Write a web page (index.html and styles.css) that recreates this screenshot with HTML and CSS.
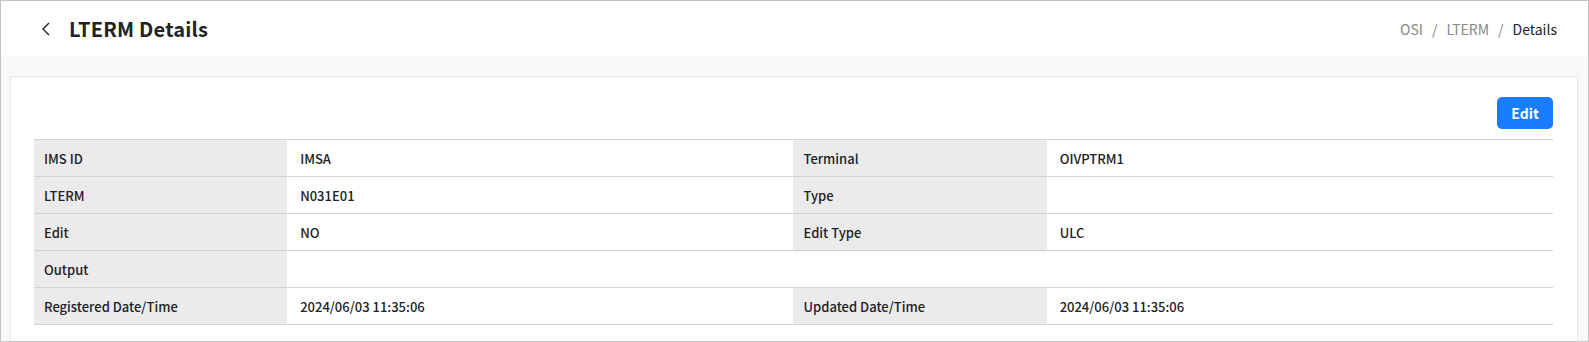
FILE: index.html
```html
<!DOCTYPE html>
<html lang="en">
<head>
    <meta charset="UTF-8">
    <meta name="viewport" content="width=device-width, initial-scale=1.0">
    <title>LTERM Details</title>
    <link rel="stylesheet" href="styles.css">
</head>
<body>
    <div class="page">
        <header class="page-header">
            <div class="title-wrap">
                <button class="back-btn" type="button" aria-label="Back">
                    <svg width="10" height="14" viewBox="0 0 10 14"><path d="M8 1 L2 7 L8 13" fill="none" stroke="#222" stroke-width="1.4"/></svg>
                </button>
                <h1>LTERM Details</h1>
            </div>
            <nav class="breadcrumb">
                <span class="crumb">OSI</span>
                <span class="sep">/</span>
                <span class="crumb">LTERM</span>
                <span class="sep">/</span>
                <span class="crumb current">Details</span>
            </nav>
        </header>

        <main class="content">
            <div class="card">
                <div class="toolbar">
                    <button class="edit-btn" type="button">Edit</button>
                </div>
                <table class="detail-table">
                    <colgroup>
                        <col class="col-label">
                        <col class="col-value">
                        <col class="col-label">
                        <col class="col-value">
                    </colgroup>
                    <tr>
                        <th>IMS ID</th>
                        <td>IMSA</td>
                        <th>Terminal</th>
                        <td>OIVPTRM1</td>
                    </tr>
                    <tr>
                        <th>LTERM</th>
                        <td>N031E01</td>
                        <th>Type</th>
                        <td></td>
                    </tr>
                    <tr>
                        <th>Edit</th>
                        <td>NO</td>
                        <th>Edit Type</th>
                        <td>ULC</td>
                    </tr>
                    <tr>
                        <th>Output</th>
                        <td colspan="3"></td>
                    </tr>
                    <tr>
                        <th>Registered Date/Time</th>
                        <td>2024/06/03 11:35:06</td>
                        <th>Updated Date/Time</th>
                        <td>2024/06/03 11:35:06</td>
                    </tr>
                </table>
            </div>
        </main>
    </div>
</body>
</html>
```

FILE: styles.css
```css
* {
    box-sizing: border-box;
}

html, body {
    margin: 0;
    padding: 0;
}

body {
    font-family: "Noto Sans CJK KR", "Noto Sans", sans-serif;
    color: #222;
    background-color: #fff;
}

.page {
    height: 342px;
    border: 1px solid #c4c4c4;
    overflow: hidden;
    background-color: #f7f8fa;
}

.page-header {
    height: 55px;
    background-color: #fff;
    display: flex;
    align-items: center;
    justify-content: space-between;
    padding: 0 31px 0 38px;
}

.title-wrap {
    display: flex;
    align-items: center;
}

.back-btn {
    background: none;
    border: none;
    padding: 0;
    width: 14px;
    height: 20px;
    display: flex;
    align-items: center;
    justify-content: center;
    cursor: pointer;
    margin-right: 16px;
}

h1 {
    margin: 0;
    font-size: 20px;
    font-weight: 700;
    letter-spacing: 0.2px;
    color: #222;
}

.breadcrumb {
    display: flex;
    align-items: center;
    font-size: 14px;
    color: #888;
}

.sep {
    margin: 0 9px;
}

.crumb.current {
    color: #222;
}

.content {
    padding: 20px 10px 0 9px;
}

.card {
    background-color: #fff;
    border: 1px solid #e6e7ea;
    padding: 20px 24px 40px 23px;
}

.toolbar {
    display: flex;
    justify-content: flex-end;
    margin-bottom: 10px;
}

.edit-btn {
    width: 56px;
    height: 32px;
    border: none;
    border-radius: 5px;
    background-color: #1a7cff;
    color: #fff;
    font-family: inherit;
    font-size: 14px;
    font-weight: 700;
    cursor: pointer;
}

.detail-table {
    width: 100%;
    border-collapse: collapse;
    table-layout: fixed;
    border-top: 1px solid #d2d2d2;
    font-size: 13px;
    font-weight: 500;
}

.col-label {
    width: 16.666%;
}

.col-value {
    width: 33.333%;
}

.detail-table th,
.detail-table td {
    height: 37px;
    border-bottom: 1px solid #d2d2d2;
    text-align: left;
    padding: 0 10px;
    font-weight: 500;
}

.detail-table th {
    background-color: #ebebeb;
}

.detail-table td {
    padding-left: 13px;
}
```
